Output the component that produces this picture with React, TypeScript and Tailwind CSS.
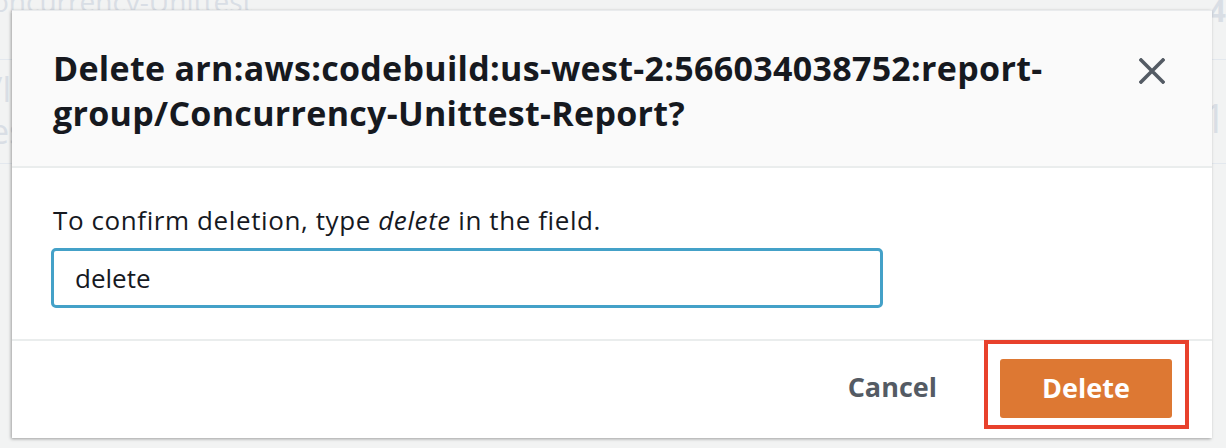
export default function App() {
  return (
    <div
      className="relative w-[1226px] h-[448px] overflow-hidden bg-[#f2f3f3]"
      style={{ fontFamily: '"Open Sans", "Noto Sans", sans-serif' }}
    >
      {/* page behind the overlay */}
      <div className="text-[#d9dee5] text-[28px] leading-none">
        <div className="flex h-[60px] border-b border-[#e3e8ee]">
          <div className="-ml-[8px] -mt-[13px] w-[800px]">
            oncurrency-Unittest
            <div className="mt-[10px] text-[34px] -ml-[10px]">e</div>
          </div>
          <div className="ml-[420px] -mt-[4px] text-[30px] font-bold">4</div>
        </div>
        <div className="flex h-[104px] border-b border-[#e3e8ee]">
          <div className="-ml-[10px] pt-[12px] w-[800px] text-[34px]">
            <div>/l</div>
            <div className="mt-[8px]">es</div>
          </div>
          <div className="ml-[420px] pt-[38px] text-[40px]">1</div>
        </div>
      </div>

      {/* modal */}
      <div className="absolute left-[12px] top-[10px] w-[1200px] h-[428px] flex flex-col bg-white border-t border-[#e9ebed] shadow-[-1px_1px_3px_rgba(0,0,0,0.35)]">
        <div className="h-[157px] flex items-start justify-between bg-[#fafafa] border-b-2 border-[#eaeded] pl-[41px] pr-[47px] pt-[35px]">
          <h1 className="text-[34px] leading-[45px] font-bold text-[#16191f] tracking-[0.3px]">
            Delete arn:aws:codebuild:us-west-2:566034038752:report-
            <br />
            group/Concurrency-Unittest-Report?
          </h1>
          <svg
            width="26"
            height="26"
            viewBox="0 0 26 26"
            className="mt-[12px] shrink-0"
          >
            <path
              d="M2 2 L24 24 M24 2 L2 24"
              stroke="#545b64"
              strokeWidth="3.6"
              strokeLinecap="square"
            />
          </svg>
        </div>

        <div className="flex-1 pl-[39px] pt-[36px] border-b-2 border-[#eaeded]">
          <p className="text-[26px] leading-[32px] text-[#16191f] pl-[2px] tracking-[0.6px]">
            To confirm deletion, type <em>delete</em> in the field.
          </p>
          <div className="mt-[12px] w-[832px] h-[60px] flex items-center border-[3px] border-[#44a1c8] rounded-[5px] px-[21px]">
            <span className="text-[26px] text-[#16191f]">delete</span>
          </div>
        </div>

        <div className="h-[97px] flex items-center justify-end pr-[23px]">
          <button className="text-[27px] font-bold text-[#545b64] mr-[47px] -mt-[4px]">
            Cancel
          </button>
          <div className="-mt-[10px] border-[4px] border-[#e8412c] pl-[12px] pr-[13px] pt-[15px] pb-[7px]">
            <button className="w-[172px] h-[59px] rounded-[3px] bg-[#dd7833] text-white text-[27px] font-bold">
              Delete
            </button>
          </div>
        </div>
      </div>
    </div>
  );
}
